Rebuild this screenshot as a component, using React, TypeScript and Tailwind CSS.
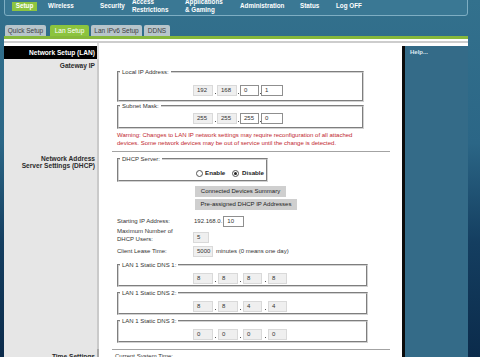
import { Fragment, type ReactNode } from "react";

type Oct = { v: string; on?: boolean; w: string; dot?: string };

function Field({ v, on, w }: { v: string; on?: boolean; w: string }) {
  return (
    <span
      className={`${w} h-[11px] shrink-0 border pl-[3px] leading-[9px] ${
        on ? "border-[#8f8f8f] bg-white" : "border-[#d9d9d9] bg-[#efefef]"
      }`}
    >
      {v}
    </span>
  );
}

function IpRow({ octets }: { octets: Oct[] }) {
  return (
    <div className="ml-[74px] flex items-center text-[6px] text-[#333]">
      {octets.map((o, i) => (
        <Fragment key={i}>
          {i > 0 && (
            <span className={`${o.dot} flex h-[11px] items-end justify-center pb-[2px]`}>
              <span className="h-px w-px bg-[#555]" />
            </span>
          )}
          <Field v={o.v} on={o.on} w={o.w} />
        </Fragment>
      ))}
    </div>
  );
}

function Group({ title, className, children }: { title: string; className: string; children: ReactNode }) {
  return (
    <fieldset className={`border-2 border-[#d2d2d2] [border-style:groove] ${className}`}>
      <legend className="ml-[1px] px-[2px] text-[6px] leading-[8px] text-[#333]">{title}</legend>
      {children}
    </fieldset>
  );
}

function Radio({ on }: { on?: boolean }) {
  return (
    <span className="flex h-[7px] w-[7px] shrink-0 items-center justify-center rounded-full border border-[#555] bg-white">
      {on && <span className="h-[3px] w-[3px] rounded-full bg-[#222]" />}
    </span>
  );
}

const ipOcts = (a: string, b: string, c: string, d: string): Oct[] => [
  { v: a, w: "w-[20px]" },
  { v: b, w: "w-[20px]", dot: "w-[4px]" },
  { v: c, w: "w-[19px]", on: true, dot: "w-[3px]" },
  { v: d, w: "w-[22px]", on: true, dot: "w-[2px]" },
];

const dnsOcts = (a: string, b: string, c: string, d: string): Oct[] => [
  { v: a, w: "w-[20px]" },
  { v: b, w: "w-[20px]", dot: "w-[5px]" },
  { v: c, w: "w-[19px]", dot: "w-[5px]" },
  { v: d, w: "w-[19px]", dot: "w-[6px]" },
];

const leftCell = "border-r-2 border-[#cacaca] bg-[#e6e6e6] pr-[2px] text-right text-[6.6px] font-bold leading-[7.5px] text-[#2b2b2b]";

export default function App() {
  return (
    <div className="flex h-[357px] w-[480px] flex-col overflow-hidden bg-[linear-gradient(180deg,#33718d_0%,#2b6686_40%,#143e60_68%,#0b2b4b_100%)] font-['Liberation_Sans',Arial,sans-serif]">
      {/* top menu */}
      <div className="ml-[4px] mt-[-4px] flex h-[20px] w-[464px] shrink-0 items-center rounded-b-[3px] border border-[#7eaec3] bg-[#3a7894] text-[6.3px] font-bold leading-[8.5px] text-white">
        <span className="ml-[7px] flex h-[9px] w-[25px] items-center justify-center bg-[#8dc540]">Setup</span>
        <span className="ml-[11px] w-[52px]">Wireless</span>
        <span className="w-[32px]">Security</span>
        <span className="w-[53px]">
          Access
          <br />
          Restrictions
        </span>
        <span className="w-[55px]">
          Applications
          <br />& Gaming
        </span>
        <span className="w-[60px]">Administration</span>
        <span className="w-[36px]">Status</span>
        <span>Log OFF</span>
      </div>

      {/* sub tabs */}
      <div className="ml-[5px] mt-[9px] flex h-[11px] shrink-0 text-[6.5px] leading-[11px]">
        <span className="w-[41px] rounded-t-[2px] bg-[#b7c5cb] text-center text-[#3d3d3d]">Quick Setup</span>
        <span className="ml-[4px] w-[39px] rounded-t-[2px] bg-[#8cc43e] text-center text-white">Lan Setup</span>
        <span className="ml-[2px] w-[51px] rounded-t-[2px] bg-[#b7c5cb] text-center text-[#3d3d3d]">Lan IPv6 Setup</span>
        <span className="ml-[2px] w-[26px] rounded-t-[2px] bg-[#b7c5cb] text-center text-[#3d3d3d]">DDNS</span>
      </div>
      <div className="ml-[4px] w-[464px] shrink-0">
        <div className="h-[3px] bg-[#86b83c]" />
        <div className="h-[2px] bg-white" />
        <div className="h-[2px] bg-[#cdcdcd]" />
      </div>

      <div className="ml-[4px] flex min-h-0 w-[464px] flex-1">
        <div className="grid w-[398px] grid-cols-[95px_303px] grid-rows-[16px_auto_auto_1fr] bg-white">
          {/* header */}
          <div className="border-r-2 border-[#dcdcdc] bg-white pt-[3px]">
            <div className="h-[13px] bg-black pr-[2px] text-right text-[6.6px] font-bold leading-[13px] text-white">
              Network Setup (LAN)
            </div>
          </div>
          <div />

          {/* gateway */}
          <div className={`${leftCell} pt-[2.5px]`}>Gateway IP</div>
          <div className="pb-[4px]">
            <Group title="Local IP Address:" className="ml-[18px] mt-[9px] w-[247px] pb-[4px] pt-[9px]">
              <IpRow octets={ipOcts("192", "168", "0", "1")} />
            </Group>
            <Group title="Subnet Mask:" className="ml-[18px] w-[247px] pb-[3px] pt-[3px]">
              <IpRow octets={ipOcts("255", "255", "255", "0")} />
            </Group>
            <p className="ml-[18px] mt-[1.5px] text-[6px] leading-[8px] text-[#c1272d]">
              Warning: Changes to LAN IP network settings may require reconfiguration of all attached
              <br />
              devices. Some network devices may be out of service until the change is detected.
            </p>
          </div>

          {/* dhcp */}
          <div className={`${leftCell} pt-[4px]`}>
            Network Address
            <br />
            Server Settings (DHCP)
          </div>
          <div className="pb-[5.5px] text-[6px] text-[#333]">
            <div className="ml-[13px] h-px w-[278px] bg-[#a3a3a3]" />
            <div className="ml-[18px]">
              <Group title="DHCP Server:" className="mt-[3.5px] w-[151px] pb-[3px] pt-[6px]">
                <div className="ml-[77px] flex h-[8px] items-center text-[6.2px] font-bold text-[#222]">
                  <Radio />
                  <span className="ml-[2px] w-[27px]">Enable</span>
                  <Radio on />
                  <span className="ml-[3px]">Disable</span>
                </div>
              </Group>
              <div className="ml-[78px] mt-[4px] h-[11px] w-[91px] bg-[#cfcfcf] text-center leading-[11px] text-[#222]">
                Connected Devices Summary
              </div>
              <div className="ml-[78px] mt-[2px] h-[11px] w-[102px] bg-[#cfcfcf] text-center leading-[11px] text-[#222]">
                Pre-assigned DHCP IP Addresses
              </div>
              <div className="mt-[6px] flex h-[11px] items-center">
                <span className="w-[77px]">Starting IP Address:</span>
                <span>192.168.0.</span>
                <span className="ml-[1px] h-[11px] w-[21px] border border-[#8f8f8f] bg-white pl-[3px] leading-[9px]">10</span>
              </div>
              <div className="mt-[1px] flex items-end">
                <span className="w-[76px] leading-[7.5px]">
                  Maximum Number of
                  <br />
                  DHCP Users:
                </span>
                <Field v="5" w="w-[16px]" />
              </div>
              <div className="mt-[3px] flex h-[11px] items-center">
                <span className="w-[76px]">Client Lease Time:</span>
                <Field v="5000" w="w-[20px]" />
                <span className="ml-[3px]">minutes (0 means one day)</span>
              </div>
              <Group title="LAN 1 Static DNS 1:" className="mt-[4px] w-[251px] pb-[1.5px] pt-[3.5px]">
                <IpRow octets={dnsOcts("8", "8", "8", "8")} />
              </Group>
              <Group title="LAN 1 Static DNS 2:" className="mt-[2px] w-[251px] pb-[1.5px] pt-[3.5px]">
                <IpRow octets={dnsOcts("8", "8", "4", "4")} />
              </Group>
              <Group title="LAN 1 Static DNS 3:" className="mt-[2px] w-[251px] pb-[1.5px] pt-[3.5px]">
                <IpRow octets={dnsOcts("0", "0", "0", "0")} />
              </Group>
            </div>
          </div>

          {/* time */}
          <div className="border-r-2 border-[#a9a9a9] bg-[#e6e6e6] pr-[2px] pt-[4px] text-right text-[6.6px] font-bold leading-[7.5px] text-[#2b2b2b]">
            Time Settings
          </div>
          <div className="text-[6px] text-[#333]">
            <div className="ml-[13px] h-px w-[278px] bg-[#a3a3a3]" />
            <p className="ml-[16px] mt-[3.5px] leading-[7.5px]">Current System Time:</p>
          </div>
        </div>

        {/* help */}
        <div className="w-[66px] bg-white pt-[3px]">
          <div className="h-full border-l-[3px] border-[#0b0b0b] bg-[#346b88] pl-[5px] pt-[2px] text-[6px] font-bold leading-[8px] text-[#dce9f0]">
            Help...
          </div>
        </div>
      </div>
    </div>
  );
}
